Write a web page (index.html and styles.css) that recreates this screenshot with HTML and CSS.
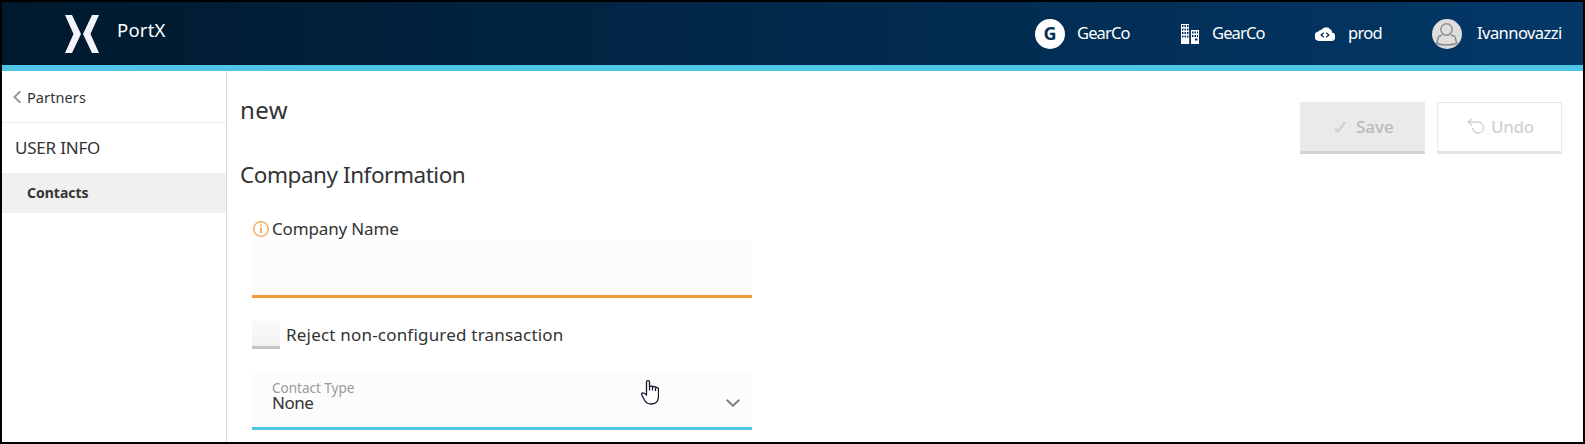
FILE: index.html
```html
<!DOCTYPE html>
<html lang="en">
<head>
<meta charset="utf-8">
<title>PortX</title>
<link rel="stylesheet" href="styles.css">
</head>
<body>
<div class="app">
  <header class="topbar">
    <svg class="logo" viewBox="0 0 34 38" width="34" height="38"><path fill="#f2f4f8" d="M0 0h7l9 19-9 19H0l8.500-19zM34 0h-7l-9 19 9 19h7l-8.500-19z"/></svg>
    <span class="brand">PortX</span>
    <nav class="account">
      <div class="item org"><span class="badge">G</span><span class="label">GearCo</span></div>
      <div class="item company">
        <svg viewBox="0 0 18 20" width="18" height="20"><path fill="#fff" d="M0 0h8v20H0zM10 6h8v14h-8z"/><path fill="#2c5379" d="M8 6h1v14H8z"/><path fill="#04315a" d="M1 1h1.500v2H1zM3.500 1H5v2H3.500zM6 1h1.500v2H6zM1 4.500h1.500v2H1zM3.500 4.500H5v2H3.500zM6 4.500h1.500v2H6zM1 8h1.500v2H1zM3.500 8H5v2H3.500zM6 8h1.500v2H6zM1 11.500h1.500v2H1zM3.500 11.500H5v2H3.500zM6 11.500h1.500v2H6zM11 7.500h1.500v2H11zM13.500 7.500H15v2h-1.500zM16 7.500h1v2h-1zM11 11h1.500v2H11zM13.500 11H15v2h-1.500zM16 11h1v2h-1zM14 14.500h2.500v2H14z"/></svg>
        <span class="label">GearCo</span>
      </div>
      <div class="item env">
        <svg viewBox="0 0 20 15" width="20" height="15"><path fill="#fff" d="M5 15a5 4.800 0 0 1-1.500-9.500Q4.300 3.800 6.500 3.800A5 4.500 0 0 1 15.500 3.600 3 3 0 0 1 17 6.600 4.200 4.200 0 0 1 15.800 15z"/><path d="M8.800 6.800 6.200 9l2.600 2.200M11.200 6.800 13.800 9l-2.600 2.200" fill="none" stroke="#04315a" stroke-width="1.300"/></svg>
        <span class="label">prod</span>
      </div>
      <div class="item user">
        <svg viewBox="0 0 30 30" width="30" height="30"><circle cx="15" cy="15" r="15" fill="#dedede"/><g fill="none" stroke="#8b8b8b" stroke-width="1.400"><circle cx="14.500" cy="10.500" r="5.700"/><path d="M10 16.200Q7 16.500 6.500 18L4.700 24.500Q14.500 27.500 24.800 24.500L23 18Q22 16.300 19 16.200"/></g></svg>
        <span class="label">Ivannovazzi</span>
      </div>
    </nav>
  </header>
  <div class="body">
    <aside class="sidebar">
      <a class="back"><svg viewBox="0 0 8 12" width="8" height="12"><path d="M7.500 0 1.500 6 7.500 12" fill="none" stroke="#999" stroke-width="2"/></svg><span>Partners</span></a>
      <div class="group">USER INFO</div>
      <a class="entry">Contacts</a>
    </aside>
    <main class="content">
      <div class="form">
        <h1 class="title">new</h1>
        <h2 class="section">Company Information</h2>
        <div class="fields">
          <label class="name-label"><svg viewBox="0 0 16 16" width="16" height="16"><g fill="none" stroke="#f79a40"><circle cx="8" cy="8" r="7.300" stroke-width="1.200"/><path d="M8 6.500v5.500M8 3.500v1.500" stroke-width="1.700"/></g></svg><span>Company Name</span></label>
          <div class="input"></div>
          <label class="check"><span class="box"></span><span class="check-text">Reject non-configured transaction</span></label>
          <div class="select">
            <div class="select-text"><span class="hint">Contact Type</span><span class="value">None</span></div>
            <svg viewBox="0 0 14 8" width="14" height="8"><path d="m.7.7 6.300 6.100L13.300.7" fill="none" stroke="#808080" stroke-width="1.900"/></svg>
            <svg class="pointer" viewBox="0 0 18 25" width="18" height="25"><path fill="#fff" stroke="#1b1730" stroke-width="1.300" stroke-linejoin="round" d="M5.500 15V2.200a1.500 1.500 0 0 1 3 0V6.500q3-.7 4 .3 2.500-.3 3 .7 2 .3 2 1.500V17q-.5 7-7.500 7-4.500 0-6.500-4L.8 15q-.7-2 1.200-2.200Q3.500 13 5.500 15z"/><path d="M8.500 6v4.500M11.500 6.500v4M14.500 7.500V11" stroke="#1b1730" stroke-width="1.200"/></svg>
          </div>
        </div>
      </div>
      <div class="actions">
        <button class="btn save"><svg viewBox="0 0 12 12" width="12" height="12"><path d="m1 7.500 3 3.200L11 1" fill="none" stroke="#d0d0d0" stroke-width="2.400"/></svg><span>Save</span></button>
        <button class="btn undo"><svg viewBox="0 0 18 16" width="18" height="16"><path d="M5 .8 1 4l4 3.500M1 4h10.500a5.500 5.500 0 1 1-6 6" fill="none" stroke="#cfcfcf" stroke-width="1.400"/></svg><span>Undo</span></button>
      </div>
    </main>
  </div>
</div>
</body>
</html>
```
FILE: styles.css
```css
* { box-sizing: border-box; }
body { margin: 0; font-family: "Noto Sans", sans-serif; color: #333; background: #fff; white-space: nowrap; }
svg { display: block; flex: none; }
.app { height: 444px; border: 2px solid #000; display: flex; flex-direction: column; overflow: hidden; }
.topbar { height: 69px; flex: none; border-bottom: 6px solid #4fc6e5; background: linear-gradient(90deg, #00192d, #033868); display: flex; align-items: flex-start; color: #fff; }
.logo { margin: 12.500px 0 0 63px; }
.brand { margin: 14px 0 0 18px; font-size: 18.500px; line-height: 28px; letter-spacing: .2px; }
.account { margin-left: auto; height: 63px; display: flex; align-items: center; padding-right: 20px; }
.item { display: flex; align-items: center; }
.label { font-size: 16.500px; line-height: 24px; padding-bottom: 1px; letter-spacing: -.85px; }
.badge { width: 30px; height: 30px; border-radius: 50%; background: #fff; color: #042f56; font-weight: 700; font-size: 18px; line-height: 29px; text-align: center; }
.org { width: 146px; gap: 12px; }
.company { width: 134px; gap: 13px; }
.env { width: 117px; gap: 13px; }
.env .label { letter-spacing: -.7px; }
.user { width: 131px; gap: 15px; }
.user .label { letter-spacing: -.55px; }
.body { flex: 1; display: flex; min-height: 0; }
.sidebar { width: 225px; flex: none; border-right: 1px solid #d9d9d9; }
.back { height: 52px; border-bottom: 1px solid #ebebeb; display: flex; align-items: center; padding-left: 11px; gap: 6px; font-size: 14.500px; letter-spacing: .1px; }
.group { height: 50px; line-height: 49px; padding-left: 13px; font-size: 17px; letter-spacing: -.2px; }
.entry { display: block; height: 40px; line-height: 40px; background: #f0f0f0; padding-left: 25px; font-size: 14px; font-weight: 700; }
.content { flex: 1; display: flex; justify-content: space-between; }
.form { padding: 22px 0 0 12px; }
.title, .section { margin: 0; padding-left: 1px; font-weight: 400; line-height: 34px; }
.title { font-size: 24px; letter-spacing: .4px; }
.section { margin-top: 31px; font-size: 22.500px; letter-spacing: -.45px; }
.fields { width: 500px; margin: 23px 0 0 13px; }
.name-label { height: 26px; display: flex; align-items: center; padding-left: 1px; gap: 3px; font-size: 17px; letter-spacing: -.15px; }
.name-label svg { margin-top: 1px; }
.input { height: 57px; background: #fcfcfc; border-bottom: 3px solid #f39a35; }
.check { display: flex; margin-top: 23px; align-items: center; height: 28px; gap: 6px; font-size: 17px; letter-spacing: .2px; }
.check-text { padding-bottom: 2px; }
.box { width: 28px; height: 28px; background: linear-gradient(#fafafa, #f2f2f2); border-bottom: 3px solid #c6c6c6; }
.select { position: relative; height: 56px; margin-top: 25px; background: #fcfcfc; border-bottom: 3px solid #4fc6e5; display: flex; justify-content: space-between; padding: 6px 12px 0 20px; }
.select-text { display: flex; flex-direction: column; }
.select > svg { margin-top: 19px; }
.hint { font-size: 13.500px; line-height: 16px; color: #999; }
.value { font-size: 17px; line-height: 14px; letter-spacing: -.5px; }
.select > .pointer { position: absolute; left: 389px; top: 6px; margin: 0; }
.actions { display: flex; gap: 12px; padding: 31px 21px 0 0; }
.btn { width: 125px; height: 52px; display: flex; align-items: center; padding: 0 0 2px 33px; gap: 10px; font: 500 17px "Noto Sans", sans-serif; border: 1px solid #e9e9e9; border-bottom: 3px solid #e4e4e4; background: #fff; color: #d2d2d2; }
.save { background: #eaeaea; border-color: #eaeaea; border-bottom-color: #d2d2d2; color: #b9b9b9; }
.save svg { margin-top: 2px; }
.undo { padding-left: 29px; gap: 6px; letter-spacing: -.3px; }
```
